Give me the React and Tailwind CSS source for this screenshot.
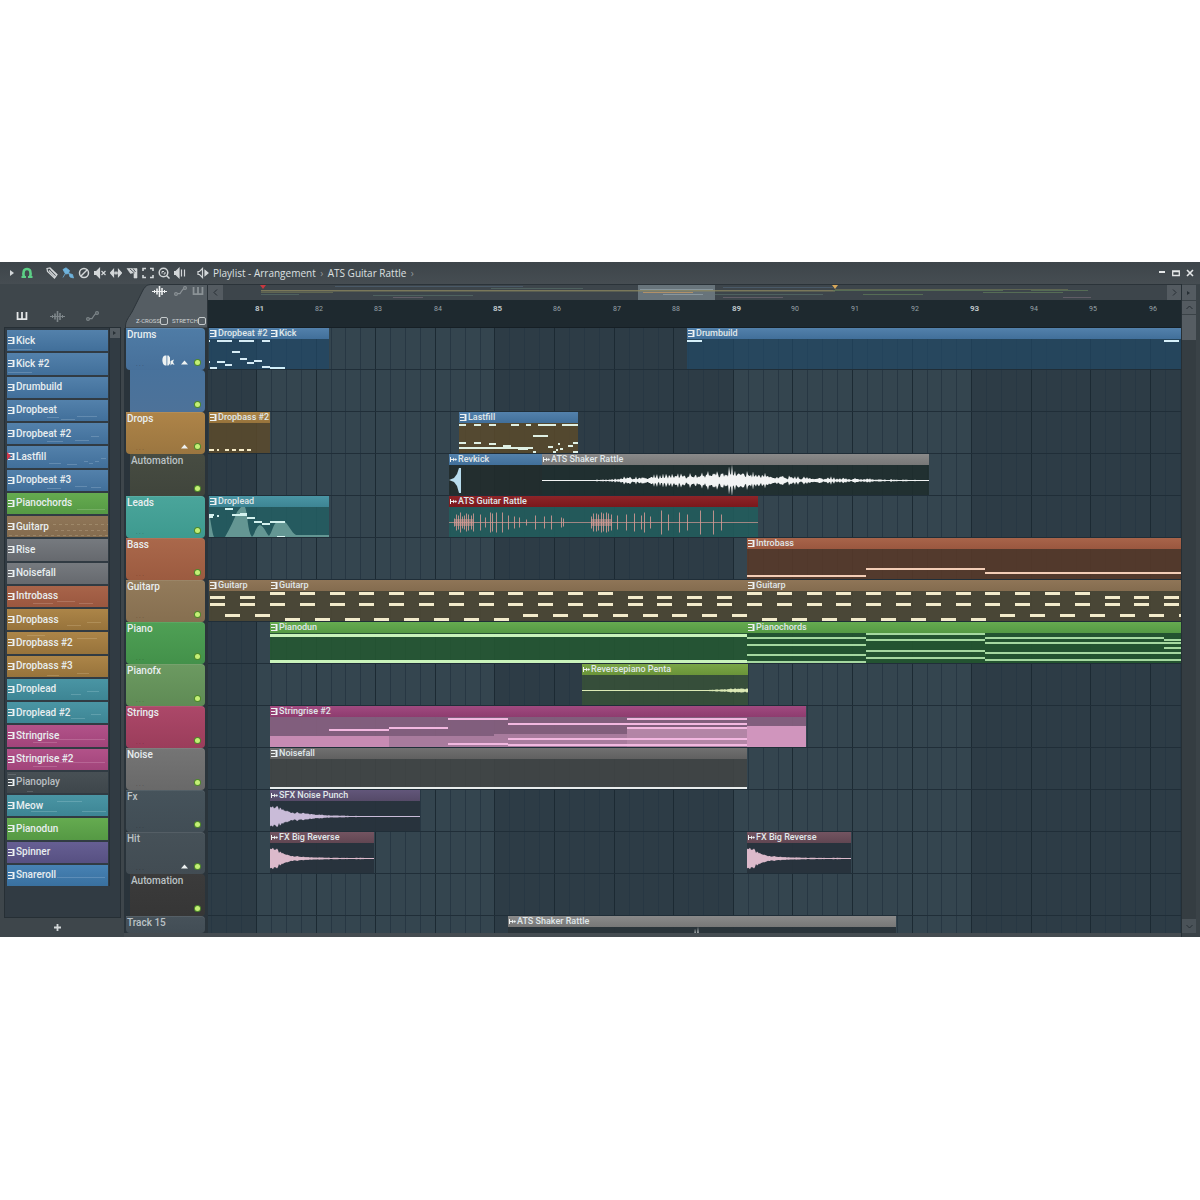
import React from "react";

// Horizontal positions are counted from the window's left edge; the lanes begin at ORIGIN.
const ORIGIN = 208;
const BAR = 59.6;
const FIRST_BAR = 256;
const BARS = 48;
const LABELS = 16;

const barX = (i) => Math.round(FIRST_BAR - ORIGIN + i * BAR);
const noise = (i) => {
  const v = Math.sin(i * 12.9898) * 43758.5453;
  return v - Math.floor(v);
};

const C = {
  blue: "from-[#5381ab] to-[#416f9a]",
  green: "from-[#65ab50] to-[#559944]",
  brown: "from-[#8f7557] to-[#846c4f]",
  grey: "from-[#767a7f] to-[#66696e]",
  rust: "from-[#a8644a] to-[#9a573f]",
  gold: "from-[#ac8548] to-[#97733b]",
  teal: "from-[#4a95a4] to-[#3d8594]",
  pink: "from-[#b25289] to-[#a1447a]",
  slate: "from-[#485055] to-[#3e464b]",
  violet: "from-[#665f93] to-[#575082]",
  sky: "from-[#4782b4] to-[#39709f]",
};

const PATTERNS = [
  ["Kick", C.blue, "#dcecf8", [[1, 19, 24]]],
  ["Kick #2", C.blue, "#dcecf8", [[1, 19, 24]]],
  ["Drumbuild", C.blue, "#dcecf8", []],
  ["Dropbeat", C.blue, "#dcecf8", [[40, 17, 12], [70, 16, 20], [54, 19, 14]]],
  ["Dropbeat #2", C.blue, "#dcecf8", [[68, 17, 14], [40, 18, 16], [84, 13, 8]]],
  ["Lastfill", C.blue, "#dcecf8", [[42, 17, 12], [60, 18, 10], [77, 15, 4], [82, 17, 4], [88, 15, 4], [94, 12, 5]]],
  ["Dropbeat #3", C.blue, "#dcecf8", [[68, 16, 12], [40, 18, 14], [84, 17, 10]]],
  ["Pianochords", C.green, "#e2f3d4", [[70, 16, 28]]],
  ["Guitarp", C.brown, "#f1e4c4", "dots"],
  ["Rise", C.grey, "#e2e4e6", []],
  ["Noisefall", C.grey, "#e2e4e6", []],
  ["Introbass", C.rust, "#f5d8ca", [[26, 17, 20], [50, 15, 18], [72, 17, 14]]],
  ["Dropbass", C.gold, "#f6e2ba", [[60, 16, 14], [80, 13, 14]]],
  ["Dropbass #2", C.gold, "#f6e2ba", [[20, 3, 18], [70, 6, 20]]],
  ["Dropbass #3", C.gold, "#f6e2ba", [[40, 19, 12], [70, 17, 12]]],
  ["Droplead", C.teal, "#d5f0f4", [[64, 15, 10], [80, 12, 12]]],
  ["Droplead #2", C.teal, "#d5f0f4", [[64, 16, 14], [84, 12, 10]]],
  ["Stringrise", C.pink, "#f9d5e9", [[26, 17, 24], [50, 14, 48]]],
  ["Stringrise #2", C.pink, "#f9d5e9", [[26, 17, 24], [50, 13, 48]]],
  ["Pianoplay", C.slate, "#c5cacc", [[1, 2, 8], [20, 19, 6]]],
  ["Meow", C.teal, "#d5f0f4", [[50, 6, 25], [24, 16, 26], [75, 16, 24]]],
  ["Pianodun", C.green, "#e2f3d4", []],
  ["Spinner", C.violet, "#d9d3ee", []],
  ["Snareroll", C.sky, "#d5e8f8", [[50, 12, 48]]],
];

const TRACKS = [
  { name: "Drums", cls: "from-[#4f7ca6] to-[#47709a]", extra: "drum", arrow: true },
  { name: "", cls: "from-[#48729c] to-[#4d7299]", sub: true },
  { name: "Drops", cls: "from-[#ae8448] to-[#9b7640]", arrow: true },
  { name: "Automation", cls: "from-[#474c42] to-[#40453c]", sub: true, dim: true },
  { name: "Leads", cls: "from-[#4aa59b] to-[#3e9a8f]" },
  { name: "Bass", cls: "from-[#aa684b] to-[#9c5b40]" },
  { name: "Guitarp", cls: "from-[#937b5b] to-[#866f50]" },
  { name: "Piano", cls: "from-[#4fa055] to-[#43914a]" },
  { name: "Pianofx", cls: "from-[#6c9a61] to-[#5f8b55]" },
  { name: "Strings", cls: "from-[#ac4869] to-[#9b3d5b]" },
  { name: "Noise", cls: "from-[#757575] to-[#696969]" },
  { name: "Fx", cls: "from-[#46535b] to-[#414d55]", dim: true },
  { name: "Hit", cls: "from-[#465158] to-[#424c53]", dim: true, arrow: true },
  { name: "Automation", cls: "from-[#3b3b3b] to-[#363636]", sub: true, dim: true },
  { name: "Track 15", cls: "from-[#47525a] to-[#424d55]", dim: true, last: true },
];

const guitarp = (x, from, to) => {
  const out = [];
  for (let i = from; i < to; i++) {
    const p = i % 16;
    const left = x + (i - from) * BAR * 0.5;
    out.push([left, p < 12 ? 12 : 16, 15], [left, 23, 15], [left + BAR / 4, p < 8 ? 38 : 34, 15]);
  }
  return out;
};

const shaker = [[0, 0.4], [40, 0.6], [70, 2], [86, 5], [92, 4], [110, 6], [125, 8], [150, 8], [165, 11], [185, 13], [190, 16], [195, 13], [210, 10], [230, 8], [250, 6.5], [275, 5], [310, 3], [345, 1.8], [375, 1], [387, 0.4]];
const punch = [[0, 12], [5, 12], [12, 8], [22, 5], [40, 3], [60, 1.4], [90, 0.6], [150, 0.4]];
const reverse = [[0, 12], [4, 13], [10, 7], [20, 3.5], [35, 1.6], [60, 1], [104, 0.6]];
const spikes = [[5, 4], [7, 8], [9, 7], [11, 10], [13, 6], [15, 7], [17, 9], [19, 8], [22, 7], [24, 9], [31, 8], [36, 5], [41, 10], [43, 9], [47, 10], [53, 10], [59, 7], [65, 6], [70, 5], [77, 3], [86, 7], [95, 6], [102, 7], [112, 5], [114, 4], [142, 6], [144, 9], [147, 9], [149, 8], [152, 10], [154, 9], [157, 10], [159, 9], [162, 8], [168, 7], [177, 8], [185, 9], [192, 7], [195, 10], [201, 6], [212, 12], [219, 8], [230, 10], [238, 8], [251, 12], [264, 12], [272, 8]];

const LANES = [
  [
    { x: 209, w: 61, name: "Dropbeat #2", head: C.blue, body: "bg-[#224865]/75", ink: "#d6ecf6",
      notes: [[209, 12, 1], [209, 33, 1], [217, 12, 15], [239, 12, 15], [262, 12, 8], [232, 23, 8], [240, 30, 7], [247, 34, 7], [254, 32, 8], [217, 33, 8], [225, 36, 7], [210, 39, 7], [262, 38, 8]] },
    { x: 270, w: 59, name: "Kick", head: C.blue, body: "bg-[#224865]/75", ink: "#cfeefa", notes: [[270, 39, 15]] },
    { x: 687, w: 1400, name: "Drumbuild", head: C.blue, body: "bg-[#224865]/70", ink: "#d6f0fa", notes: [[687, 12, 15], [1164, 12, 15]] },
  ],
  [],
  [
    { x: 209, w: 61, name: "Dropbass #2", head: C.gold, body: "bg-[#5c4a2b]/85", ink: "#f7ecc8",
      notes: [[209, 37, 5], [217, 37, 2], [225, 37, 4], [232, 37, 4], [239, 37, 5], [247, 37, 4]] },
    { x: 459, w: 119, name: "Lastfill", head: C.blue, body: "bg-[#5a4a2c]/85", ink: "#dff0e4",
      notes: [[459, 12, 7], [474, 12, 7], [489, 12, 7], [511, 12, 8], [526, 12, 5], [538, 12, 18], [562, 12, 16], [533, 23, 15], [459, 30, 7], [474, 30, 7], [489, 31, 7], [503, 33, 8], [459, 35, 74], [518, 36, 10], [548, 34, 5], [558, 31, 2], [560, 36, 3], [556, 37, 2], [553, 39, 3], [533, 39, 3], [568, 33, 5], [573, 30, 5], [573, 39, 5]] },
  ],
  [
    { x: 449, w: 93, name: "Revkick", audio: true, head: C.blue, body: "bg-[#212b2b]/90", ink: "#b8dcee", kick: true },
    { x: 542, w: 387, name: "ATS Shaker Rattle", audio: true, head: "from-[#8a8a8a] to-[#777777]", body: "bg-[#1f2d2e]/90", ink: "#f2f4f4", wave: shaker, ripple: true },
  ],
  [
    { x: 209, w: 120, name: "Droplead", head: C.teal, body: "bg-[#235c60]/90", ink: "#d3f1ee", hills: true,
      notes: [[209, 18, 5], [217, 19, 2], [209, 20, 4], [225, 12, 8], [232, 18, 15], [240, 17, 7], [247, 21, 8], [254, 25, 8], [262, 27, 8], [270, 25, 15], [277, 40, 8]] },
    { x: 449, w: 309, name: "ATS Guitar Rattle", audio: true, head: "from-[#8e2428] to-[#7a181c]", body: "bg-[#225c5c]/90", ink: "#d59a94", spikes: true },
  ],
  [{ x: 747, w: 1400, name: "Introbass", head: C.rust, body: "bg-[#573829]/90", ink: "#f3cdb6", notes: [[747, 37, 119], [866, 30, 119], [985, 34, 500]] }],
  [
    { x: 209, w: 61, name: "Guitarp", head: C.brown, body: "bg-[#4d4734]/90", ink: "#f3ebcb", thick: 3, notes: guitarp(210, 14, 16) },
    { x: 270, w: 477, name: "Guitarp", head: C.brown, body: "bg-[#4d4734]/90", ink: "#f3ebcb", thick: 3, notes: guitarp(270, 0, 16) },
    { x: 747, w: 1400, name: "Guitarp", head: C.brown, body: "bg-[#4d4734]/90", ink: "#f3ebcb", thick: 3, notes: guitarp(747, 0, 46) },
  ],
  [
    { x: 270, w: 477, name: "Pianodun", head: C.green, body: "bg-[#255632]/90", ink: "#c9f3bb", thick: 3, notes: [[270, 12, 477], [270, 38, 477]] },
    { x: 747, w: 1400, name: "Pianochords", head: C.green, body: "bg-[#23542f]/95", ink: "#a5d8a0",
      notes: [[747, 15, 119], [747, 22, 119], [747, 32, 119], [747, 39, 119], [866, 11, 119], [866, 17, 119], [866, 28, 119], [866, 35, 119], [985, 15, 179], [985, 20, 400], [985, 30, 400], [985, 37, 400], [1164, 17, 200], [1164, 25, 200]] },
  ],
  [{ x: 582, w: 166, name: "Reversepiano Penta", audio: true, head: "from-[#7aa646] to-[#6a9439]", body: "bg-[#375038]/90", ink: "#dceab5", wave: [[0, 0.4], [120, 0.4], [140, 1.2], [156, 2.5], [166, 2]] }],
  [{ x: 270, w: 536, name: "Stringrise #2", head: "from-[#a14a80] to-[#8e3c6f]", body: "bg-[#86607f]/95", ink: "#f2b8e0",
     blocks: [[270, 30, 119, 12, "#c78bb3"], [389, 30, 105, 12, "#a87b9d"], [494, 28, 133, 14, "#a87b9d"], [627, 22, 120, 20, "#b385a6"], [747, 20, 59, 22, "#d095bd"]],
     notes: [[329, 23, 60], [389, 21, 59], [448, 12, 60], [448, 37, 60], [508, 17, 239], [508, 32, 239], [508, 38, 239], [627, 12, 120], [627, 21, 120]] }],
  [{ x: 270, w: 477, name: "Noisefall", head: "from-[#707070] to-[#606060]", body: "bg-[#414545]/90", ink: "#e8ecec", notes: [[270, 39, 477]] }],
  [{ x: 270, w: 150, name: "SFX Noise Punch", audio: true, head: "from-[#62567a] to-[#554a68]", body: "bg-[#28333c]/95", ink: "#c9bbd8", wave: punch, soft: true }],
  [
    { x: 270, w: 104, name: "FX Big Reverse", audio: true, head: "from-[#735461] to-[#614652]", body: "bg-[#28333c]/95", ink: "#dcbacb", wave: reverse, soft: true },
    { x: 747, w: 104, name: "FX Big Reverse", audio: true, head: "from-[#735461] to-[#614652]", body: "bg-[#28333c]/95", ink: "#dcbacb", wave: reverse, soft: true },
  ],
  [],
  [{ x: 508, w: 388, name: "ATS Shaker Rattle", audio: true, head: "from-[#8a8a8a] to-[#777777]", body: "bg-[#2a343a]/95", ink: "#e8eaea", wave: shaker, ripple: true }],
];

function wavePath(points, mid, ripple, soft) {
  const end = points[points.length - 1][0];
  const top = [];
  const bottom = [];
  for (let x = 0; x <= end; x++) {
    let k = 0;
    while (k < points.length - 2 && points[k + 1][0] < x) k++;
    const [x0, a0] = points[k];
    const [x1, a1] = points[k + 1];
    const a = a0 + ((a1 - a0) * (x - x0)) / (x1 - x0);
    let f = soft ? 0.6 + 0.4 * noise(x + 3) : 0.5 + 0.5 * noise(x + 7);
    if (ripple) f = (0.25 + (x % 3 === 1 ? 0.75 : 0.35) * noise(x + 7)) * (x > 230 ? 0.5 + 0.5 * Math.abs(Math.cos(x / 4)) : 1);
    if (ripple && x === 190) f = 1;
    const h = Math.max(0.5, a * f);
    top.push(`${x},${(mid - h).toFixed(1)}`);
    bottom.unshift(`${x},${(mid + h).toFixed(1)}`);
  }
  return `M${top.join("L")}L${bottom.join("L")}Z`;
}

const MidiIcon = ({ className }) => (
  <svg viewBox="0 0 7 7" className={className} fill="none" stroke="currentColor" aria-hidden="true">
    <path d="M0 .5H6M0 6.500H6M0 3.500H4" />
    <path d="M5.700 0V7" strokeWidth="1.600" />
    <path d="M4.500 1V6" strokeOpacity=".4" />
  </svg>
);

const AudioIcon = ({ className }) => (
  <svg viewBox="0 0 7 7" className={className} fill="currentColor" aria-hidden="true">
    <path d="M0 1H1V6H0ZM1 3H3V1.500L5 3.500 3 5.500V4H1ZM5 2.500H6L7 3.500 6 4.500H5Z" />
  </svg>
);

function Clip({ clip }) {
  const { x, w, name, audio, head, body, ink, notes = [], blocks = [], thick = 2 } = clip;
  const Icon = audio ? AudioIcon : MidiIcon;
  return (
    <div className="absolute top-0 h-[41px] overflow-hidden" style={{ left: x - ORIGIN, width: w }}>
      <div className={`absolute inset-x-0 top-[11px] bottom-0 ${body}`} />
      <div className={`relative flex h-[11px] items-center gap-px bg-linear-to-b pl-px ${head}`}>
        <Icon className="h-[7px] w-[7px] shrink-0 text-[#eef2f2]" />
        <span className="text-[9px] leading-[11px] font-medium whitespace-nowrap text-[#e0e8ea]">{name}</span>
      </div>
      <svg className="absolute inset-0 h-full w-full" aria-hidden="true">
        {blocks.map(([bx, by, bw, bh, fill], i) => (
          <rect key={i} x={bx - x} y={by} width={bw} height={bh} fill={fill} shapeRendering="crispEdges" />
        ))}
        {clip.hills && (
          <path
            d="M0 41V17C2 26 3 36 5 41ZM16 41C21 32 25 24 28 16L32 11H36C39 18 38 34 43 41ZM43 41C46 38 47 30 51 29C55 30 57 37 60 40C63 37 64 28 68 26H76C80 29 82 36 87 39H120V41Z"
            fill="#8fc0b8"
            fillOpacity=".6"
          />
        )}
        {notes.map(([nx, ny, nw], i) => (
          <rect key={i} x={Math.round(nx - x)} y={ny} width={nw} height={thick} fill={ink} shapeRendering="crispEdges" />
        ))}
        {clip.wave && <path d={wavePath(clip.wave, 26.5, clip.ripple, clip.soft)} fill={ink} />}
        {clip.kick && <path d="M0 26 5 24 8 20 10 14H12V39H10L8 32 5 28Z" fill={ink} />}
        {clip.spikes && (
          <g stroke={ink}>
            <path d="M0 26.500H309" strokeWidth="1" strokeOpacity=".7" />
            {spikes.map(([sx, h], i) => (
              <path key={i} d={`M${sx + 0.5} ${26.5 - h}V${26.5 + h}`} strokeOpacity=".85" />
            ))}
            <path d="M6 26.500H24M142 26.500H163" strokeWidth="7" strokeOpacity=".5" />
          </g>
        )}
      </svg>
    </div>
  );
}

function Grid() {
  const shades = [];
  const lines = [];
  for (let i = 0; i < BARS; i++) {
    if (i % 8 === 0) shades.push(<rect key={i} x={barX(i)} y="0" width={barX(i + 4) - barX(i)} height="100%" fill="#34454f" />);
  }
  for (let i = -3; i < BARS * 4; i++) {
    const px = barX(i / 4);
    lines.push(<rect key={i} x={px} y="0" width="1" height="100%" fill={i % 4 === 0 ? "#1c2a33" : "#273743"} />);
  }
  return (
    <svg className="absolute inset-0 h-full w-full" shapeRendering="crispEdges" aria-hidden="true">
      {shades}
      {lines}
    </svg>
  );
}

const I = ({ children, label, color = "text-[#d3d7d9]", sw = 1.2 }) => (
  <button type="button" aria-label={label} className={`flex h-4 w-4 items-center justify-center ${color}`}>
    <svg viewBox="0 0 12 12" className="h-3 w-3" fill="none" stroke="currentColor" strokeWidth={sw} aria-hidden="true">
      {children}
    </svg>
  </button>
);

const PianoGlyph = ({ className }) => (
  <svg viewBox="0 0 12 9" className={className} fill="none" stroke="currentColor" strokeWidth="2" aria-hidden="true">
    <path d="M1 0V8H11V0M6 0V8" />
  </svg>
);
const WaveGlyph = ({ className }) => (
  <svg viewBox="0 0 15 11" className={className} fill="none" stroke="currentColor" aria-hidden="true">
    <path d="M0 5.500H15M2.500 4V7M12.500 4V7" />
    <path d="M5 2.500V8.500M7.500 0V11M10 2V9" strokeWidth="1.600" />
  </svg>
);
const AutoGlyph = ({ className }) => (
  <svg viewBox="0 0 13 10" className={className} fill="none" stroke="currentColor" strokeWidth="1.200" aria-hidden="true">
    <circle cx="2" cy="8" r="1.400" />
    <circle cx="11" cy="2" r="1.400" />
    <path d="M3.400 7.600H6L8 4.500 9.600 2.600" />
  </svg>
);

function TitleBar() {
  return (
    <header className="flex h-[22px] items-center bg-linear-to-b from-[#3d454a] to-[#464d52]">
      <button type="button" aria-label="Menu" className="ml-1 flex h-4 w-4 items-center justify-center text-[#d3d7d9]">
        <svg viewBox="0 0 4 6" className="h-1.5 w-1" fill="currentColor"><path d="M0 0 4 3 0 6Z" /></svg>
      </button>
      <div className="-ml-px">
        <I label="Snap" color="text-[#5ccf86]" sw={2.6}><path d="M.5 10H5M7 10H11.500" strokeWidth="1.800" /><path d="M3 10.500C1.500 4.500 3 2 6 2S10.500 4.500 9 10.500" /></I>
      </div>
      <div className="ml-[9px] flex">
        <I label="Draw"><path d="M1 1.500 4 1 11 7.500 8.500 11 1.500 4.500ZM3 3.500 9 9.500M4.500 2 10.500 8" /></I>
        <I label="Paint" color="text-[#6fb3dc]"><path d="M1 2.500 4 .8 7.500 3.500 6.500 6.500 3.500 7ZM3 7 1 10.500M7 6.500 10.500 7.500 11.500 11 8 10Z" fill="currentColor" strokeWidth=".8" /></I>
        <I label="Delete" sw={1.5}><circle cx="6" cy="6" r="4.500" /><path d="M3 9 9 3" /></I>
        <I label="Mute"><path d="M.5 4.500H2.500L5.500 1.500V10.500L2.500 7.500H.5Z" fill="currentColor" /><path d="M7.500 4 11.500 8M11.500 4 7.500 8" /></I>
        <I label="Slip"><path d="M.5 6 3.500 2.500V9.500ZM11.500 6 8.500 2.500V9.500Z" fill="currentColor" /><path d="M5.200 4.500V7.500M6.800 4.500V7.500M3 6H9" /></I>
        <I label="Slice"><path d="M1 1.500H11V11H8V5.500L4.500 6.500Z" fill="currentColor" strokeWidth=".6" /><path d="M4 2 8.500 6M7 1.500 9.500 5" stroke="#454c51" strokeWidth=".9" /></I>
        <I label="Select" sw={1.6}><path d="M1 4V1.500H4M8 1.500H11V4M11 8V10.500H8M4 10.500H1V8" /></I>
        <I label="Zoom" sw={1.5}><circle cx="5.500" cy="5.500" r="4.300" /><path d="M8.500 8.500 11.500 11.500" /><path d="M4 6.500V4.500H6M7 5V7H5.500" strokeWidth="1" /></I>
        <I label="Playback"><path d="M.5 4.500H2L5 1.500V10.500L2 7.500H.5Z" fill="currentColor" /><path d="M7.500 2.500V9.500M10.500 2.500V9.500" /></I>
      </div>
      <div className="ml-[7px]"><I label="Preview"><path d="M1 4.500H2.500L5.500 1.500V10.500L2.500 7.500H1Z" /><path d="M8 3.500 11 6 8 8.500Z" fill="currentColor" /></I></div>
      <h1 className="ml-0.5 flex font-['Open_Sans'] text-[10px] leading-4 font-medium whitespace-nowrap text-[#dde0e1]">
        <span>Playlist - Arrangement</span>
        <span className="w-3 text-center text-[#90979b]">›</span>
        <span>ATS Guitar Rattle</span>
        <span className="w-3 text-center text-[#90979b]">›</span>
      </h1>
      <div className="mr-[3px] ml-auto flex text-[#e4e7e8]">
        <button type="button" aria-label="Minimize" className="flex h-4 w-[14px] items-center justify-center"><svg viewBox="0 0 8 8" className="h-2 w-2" fill="currentColor"><path d="M1 2H7V4H1Z" /></svg></button>
        <button type="button" aria-label="Maximize" className="flex h-4 w-[14px] items-center justify-center"><svg viewBox="0 0 8 8" className="h-2 w-2" fill="none" stroke="currentColor" strokeWidth="1.300"><path d="M.7 2H7.300V6.500H.7ZM.7 2.600H7.300" /></svg></button>
        <button type="button" aria-label="Close" className="flex h-4 w-[14px] items-center justify-center"><svg viewBox="0 0 8 8" className="h-2 w-2" fill="none" stroke="currentColor" strokeWidth="1.600"><path d="M1 1 7 7M7 1 1 7" /></svg></button>
      </div>
    </header>
  );
}

function PatternList() {
  return (
    <aside className="flex w-[124px] shrink-0 flex-col bg-[#3e464b]">
      <div className="flex h-[43px] items-end gap-[15px] pb-[3px] pl-[14px] text-[#7e868a]">
        <button type="button" aria-label="Patterns" className="flex h-4 w-4 items-center justify-center text-[#e4e7e8]"><PianoGlyph className="h-2 w-3" /></button>
        <button type="button" aria-label="Audio" className="flex h-4 w-6 items-center justify-center"><WaveGlyph className="h-[11px] w-[15px]" /></button>
        <button type="button" aria-label="Automation clips" className="flex h-4 w-4 items-center justify-center"><AutoGlyph className="h-2.5 w-[13px]" /></button>
      </div>
      <div className="mr-[3px] ml-1 flex flex-1 border border-[#262f35] bg-[#313b43]">
        <div className="flex h-[558px] w-[105px] flex-col gap-0.5 border-r border-[#262f35] pt-0.5 pr-px pl-0.5">
          {PATTERNS.map(([name, bg, ink, notes]) => (
            <button
              key={name}
              type="button"
              className={`relative flex min-h-0 flex-1 items-center gap-px overflow-hidden bg-linear-to-b pl-px text-left ${bg}`}
            >
              <svg className="absolute inset-0 h-full w-full opacity-20" aria-hidden="true">
                {notes === "dots"
                  ? [...Array(18)].map((_, k) => (
                      <path key={k} d={`M${2 + k * 6} 19.500h3M${46 + k * 6} 8.500h3M${48 + k * 6} 14.500h3`} stroke={ink} />
                    ))
                  : notes.map(([x, y, w], k) => <path key={k} d={`M${x} ${y}.5h${w}`} stroke={ink} />)}
              </svg>
              {name === "Lastfill" && (
                <svg viewBox="0 0 4 8" className="absolute top-1.5 left-0 z-10 h-2 w-1" fill="#d3364a"><path d="M0 0 4 4 0 8Z" /></svg>
              )}
              <MidiIcon className="relative h-[7px] w-[7px] shrink-0 text-[#eef2f2]" />
              <span className={`relative text-[10px] leading-3 font-medium whitespace-nowrap ${name === "Pianoplay" ? "text-[#b9bfc2]" : "text-[#e8eef0]"}`}>{name}</span>
            </button>
          ))}
        </div>
        <div className="flex-1">
          <button type="button" aria-label="Scroll" className="flex h-[10px] w-full items-center justify-center bg-[#545c62] text-[#283036]">
            <svg viewBox="0 0 4 4" className="h-1 w-1" fill="currentColor"><path d="M0 0 3 2 0 4Z" /></svg>
          </button>
        </div>
      </div>
      <button type="button" aria-label="Add pattern" className="ml-[49px] flex h-[19px] w-4 items-center justify-center text-[#d3d7d9]">
        <svg viewBox="0 0 7 7" className="h-[7px] w-[7px]" stroke="currentColor" strokeWidth="1.800"><path d="M3.500 0V7M0 3.500H7" /></svg>
      </button>
    </aside>
  );
}

function Corner() {
  return (
    <div className="relative h-[44px] overflow-hidden bg-[#3e464b]">
      <svg viewBox="0 0 84 44" className="absolute inset-0 h-full w-[84px]" aria-hidden="true">
        <path d="M1.500 44V42C1.500 37 5 33 8 28L18 8C21 2 23 .5 28 .5H83.500V44Z" fill="#555d63" stroke="#2b3339" />
      </svg>
      <div className="relative flex justify-end gap-[3px] pt-px pr-1 text-[#8b9296]">
        <button type="button" aria-label="Audio clips" className="flex h-3 w-[18px] items-center justify-center text-[#eef0f1]"><WaveGlyph className="h-[11px] w-[15px]" /></button>
        <button type="button" aria-label="Automation" className="flex h-3 w-[18px] items-center justify-center"><AutoGlyph className="h-2.5 w-[13px]" /></button>
        <button type="button" aria-label="Pattern clips" className="flex h-3 w-3 items-center justify-center"><PianoGlyph className="h-2 w-3" /></button>
      </div>
      <div className="relative mt-[19px] flex justify-end gap-1 pr-0.5 text-[6px] leading-[9px] text-[#d0d4d6]">
        {["Z-CROSS", "STRETCH"].map((t) => (
          <label key={t} className="flex items-center">
            {t}
            <input type="checkbox" className="h-2 w-2 appearance-none rounded-[2px] border border-[#c5cacc]" />
          </label>
        ))}
      </div>
    </div>
  );
}

function TrackHeader({ track }) {
  return (
    <div className={`flex shrink-0 bg-[#2a343b] pr-[3px] ${track.last ? "h-[17px]" : "h-[42px]"} ${track.sub ? "pl-1.5" : "pl-0.5"}`}>
      <div
        className={`relative flex flex-1 flex-col justify-between overflow-hidden rounded-r-[4px] bg-linear-to-b ${track.cls} ${track.sub ? "" : "rounded-bl-[4px] shadow-[inset_0_1px_0_rgba(255,255,255,0.08)]"}`}
      >
        <span className={`h-3 pl-px text-[10px] leading-[13px] font-medium ${track.dim ? "text-[#bcc3c6]" : "text-[#e8eef0]"}`}>{track.name}</span>
        {!track.last && (
          <div className="flex items-end pr-1 pb-1">
            <span className={`ml-2.5 text-[6px] leading-[4px] text-black/50 ${track.sub ? "invisible" : ""}`}>. . .</span>
            <div className="ml-auto flex items-end gap-1.5 text-[#eef2f2]">
              {track.extra && (
                <svg viewBox="0 0 14 12" className="-mb-px h-3 w-[14px]" fill="currentColor" aria-hidden="true">
                  <path d="M4 .5C.5 1 .5 9 4 10.500H5.500V.5ZM6.300 .5H7.500L9 2.500V8.500L7.500 10.500H6.300ZM9.500 6 13 4.500 12 7 13.500 10 11 9 9.500 10.500Z" />
                </svg>
              )}
              {track.arrow && (
                <svg viewBox="0 0 7 6" className="h-1.5 w-[7px]" fill="currentColor" aria-hidden="true"><path d="M0 4.500 3.500.5 7 4.500Z" /></svg>
              )}
              <button type="button" aria-label={`Mute ${track.name}`} className="flex h-[7px] w-[7px] items-center justify-center rounded-full bg-[#4f8a2a]">
                <span className="h-[5px] w-[5px] rounded-full bg-[#c4ef76]" />
              </button>
            </div>
          </div>
        )}
      </div>
    </div>
  );
}

function Overview() {
  return (
    <div className="flex h-4 items-stretch border-t border-[#2b3339] bg-[#3d454b]">
      <button type="button" aria-label="Scroll left" className="flex w-[15px] items-center justify-center bg-[#545b61] text-[#272f35]">
        <svg viewBox="0 0 5 7" className="h-[7px] w-[5px]" fill="none" stroke="currentColor"><path d="M4 .5 1 3.500 4 6.500" /></svg>
      </button>
      <svg viewBox="0 0 944 15" preserveAspectRatio="none" className="h-[15px] min-w-0 flex-1" aria-hidden="true">
        <rect x="415" width="77" height="15" fill="#68747b" />
        <g fill="none" strokeWidth="1" strokeOpacity=".75">
          <path d="M38 5.500H612" stroke="#8f8a5f" />
          <path d="M38 6.500H612" stroke="#8f8a5f" strokeOpacity=".35" />
          <path d="M38 7.500H110M612 4.500H845" stroke="#6b7054" />
          <path d="M112 1.500H300M500 2.500H610" stroke="#4f6070" />
          <path d="M38 9.500H76M150 10.500H250M268 3.500H360M492 9.500H600" stroke="#566b66" />
          <path d="M610 5.500H780M808 5.500H865M760 7.500H840M640 9.500H700" stroke="#5d7a58" />
          <path d="M170 12.500H200M840 12.500H868M500 12.500H560" stroke="#6e6570" />
          <path d="M417 4.500H490M440 9.500H480" stroke="#93a2a8" />
          <path d="M420 7.500H470" stroke="#c99a62" />
        </g>
        <path d="M37 0H43L40 4Z" fill="#c8383f" />
        <path d="M609 0H615L612 4Z" fill="#d9a85a" />
      </svg>
      <button type="button" aria-label="Scroll right" className="flex w-[14px] items-center justify-center bg-[#545b61] text-[#272f35]">
        <svg viewBox="0 0 5 7" className="h-[7px] w-[5px]" fill="none" stroke="currentColor"><path d="M1 .5 4 3.500 1 6.500" /></svg>
      </button>
    </div>
  );
}

function VScroll() {
  return (
    <div className="flex w-[19px] shrink-0 flex-col border-l border-[#262f35] bg-[#3a4247] pr-1">
      <button type="button" aria-label="Zoom" className="mt-px flex h-[15px] items-center justify-center bg-[#545b61] text-[#272f35]">
        <svg viewBox="0 0 4 4" className="h-1 w-1" fill="currentColor"><path d="M0 0 3 2 0 4Z" /></svg>
      </button>
      <button type="button" aria-label="Scroll up" className="mt-px flex h-[13px] items-center justify-center bg-[#545b61] text-[#272f35]">
        <svg viewBox="0 0 7 5" className="h-[5px] w-[7px]" fill="none" stroke="currentColor"><path d="M.5 4 3.500 1 6.500 4" /></svg>
      </button>
      <div className="mt-px h-[25px] bg-[#565d63]" />
      <div className="flex-1 bg-[#353d42]" />
      <button type="button" aria-label="Scroll down" className="mb-1 flex h-[14px] items-center justify-center bg-[#4a5258] text-[#272f35]">
        <svg viewBox="0 0 7 5" className="h-[5px] w-[7px]" fill="none" stroke="currentColor"><path d="M.5 1 3.500 4 6.500 1" /></svg>
      </button>
    </div>
  );
}

export default function App() {
  return (
    <div className="flex min-h-screen flex-col justify-center bg-white pb-px font-['Roboto',sans-serif]">
      <main className="flex flex-col bg-[#3e464b]">
        <TitleBar />
        <div className="flex">
          <PatternList />
          <section className="flex w-[84px] shrink-0 flex-col bg-[#2a343b]">
            <Corner />
            {TRACKS.map((t, i) => (
              <TrackHeader key={i} track={t} />
            ))}
            <div className="h-1 bg-[#454c51]" />
          </section>
          <section className="flex min-w-0 flex-1 flex-col">
            <Overview />
            <div className="relative h-7 overflow-hidden border-b border-[#161f25] bg-[#1e292f]">
              {[...Array(LABELS)].map((_, i) => (
                <span
                  key={i}
                  className={`absolute top-[3px] leading-3 ${i % 4 === 0 ? "text-[8px] font-bold text-[#bcc4c8]" : "text-[7px] text-[#98a2a8]"}`}
                  style={{ left: barX(i) - 1 }}
                >
                  {81 + i}
                </span>
              ))}
            </div>
            <div className="relative overflow-hidden bg-[#2d3c46]">
              <Grid />
              {LANES.map((clips, i) => (
                <div key={i} className={`relative overflow-hidden ${i === LANES.length - 1 ? "h-[17px]" : "h-[42px] border-b border-[#202e38]"}`}>
                  {clips.map((c) => (
                    <Clip key={c.x} clip={c} />
                  ))}
                </div>
              ))}
            </div>
            <div className="h-1 bg-[#454c51]" />
          </section>
          <VScroll />
        </div>
      </main>
    </div>
  );
}
